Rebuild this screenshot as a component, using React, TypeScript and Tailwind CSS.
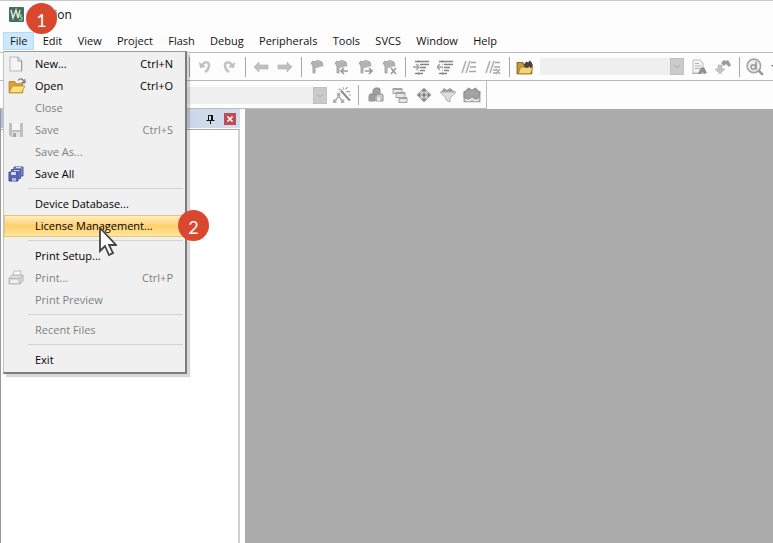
import React from 'react';

function Icon({ children, className = 'w-4 h-4' }: { children: React.ReactNode; className?: string }) {
  return (
    <svg viewBox="0 0 16 16" className={`${className} shrink-0`} fill="none" aria-hidden="true">
      {children}
    </svg>
  );
}

const flag = (
  <path d="M2 4l2-2 2 1c2-2 3-2 4-1l3 1 1 4c-3-1-4 2-7 1l-1 1v5H4V7z" fill="#b4b4b4" stroke="#a6a6a6" />
);

const icons = {
  undo: (
    <Icon>
      <path d="M2 3l1 6 6-1z" fill="#bdbdbd" />
      <path d="M5 6c3-4 7-3 7 0 0 3-1 5-4 7" stroke="#c2c2c2" strokeWidth="2.500" />
    </Icon>
  ),
  redo: (
    <Icon>
      <path d="M14 3l-1 6-6-1z" fill="#bdbdbd" />
      <path d="M11 6C8 2 4 3 4 6c0 3 1 5 4 7" stroke="#c2c2c2" strokeWidth="2.500" />
    </Icon>
  ),
  back: (
    <Icon>
      <path d="M1 8l5-5v3h9v4H6v3z" fill="#c0c0c0" stroke="#b0b0b0" strokeWidth=".6" />
    </Icon>
  ),
  forward: (
    <Icon>
      <path d="M15 8l-5-5v3H1v4h9v3z" fill="#c0c0c0" stroke="#b0b0b0" strokeWidth=".6" />
    </Icon>
  ),
  bookmark: <Icon>{flag}</Icon>,
  bookmarkPrev: (
    <Icon>
      {flag}
      <path d="M15 12H8" stroke="#fdfdfd" strokeWidth="5" />
      <path d="M15 12H8m3-3l-3 3 3 3" stroke="#999" strokeWidth="1.600" />
    </Icon>
  ),
  bookmarkNext: (
    <Icon>
      {flag}
      <path d="M8 12h7" stroke="#fdfdfd" strokeWidth="5" />
      <path d="M8 12h7m-3-3l3 3-3 3" stroke="#999" strokeWidth="1.600" />
    </Icon>
  ),
  bookmarkClear: (
    <Icon>
      {flag}
      <path d="M9 12h6" stroke="#fdfdfd" strokeWidth="5" />
      <path d="M10 9l5 6m0-6l-5 6" stroke="#999" strokeWidth="1.600" />
    </Icon>
  ),
  indent: (
    <Icon>
      <path d="M2 2.500h14M7 5.500h9M7 8.500h6M7 11.500h5M2 14.500h8" stroke="#858585" strokeWidth="1.400" />
      <path d="M0 8h6M3 5l3 3-3 3" stroke="#a0a0a0" strokeWidth="1.300" />
      <path d="M5.500 1v15" stroke="#b0b0b0" strokeDasharray="1 1" />
    </Icon>
  ),
  outdent: (
    <Icon>
      <path d="M2 2.500h14M7 5.500h9M7 8.500h6M7 11.500h5M2 14.500h8" stroke="#858585" strokeWidth="1.400" />
      <path d="M6 8H0M3 5L0 8l3 3" stroke="#a0a0a0" strokeWidth="1.300" />
      <path d="M5.500 1v15" stroke="#b0b0b0" strokeDasharray="1 1" />
    </Icon>
  ),
  comment: (
    <Icon>
      <path d="M1 14L5 2M5 14L9 2" stroke="#b0b0b0" strokeWidth="1.600" />
      <path d="M10 3.500h5M9 8h6M8 12.500h7" stroke="#a6a6a6" strokeWidth="1.400" />
    </Icon>
  ),
  uncomment: (
    <Icon>
      <path d="M1 14L5 2M5 14L9 2" stroke="#b0b0b0" strokeWidth="1.600" />
      <path d="M10 3.500h5M9 8h6M8 11h3M8 14h3M11 10l4 5m0-5l-4 5" stroke="#a6a6a6" strokeWidth="1.300" />
    </Icon>
  ),
  findFolder: (
    <Icon className="w-[18px] h-[18px]">
      <path d="M1 14V4h5l1 2h7v8z" fill="#c99a3a" stroke="#84682c" />
      <path d="M2 14l2-6h11l-2 6z" fill="#f6d46e" stroke="#987936" strokeWidth=".7" />
      <path d="M7 6l2-3 2 1 1-2 2 2 1 3-2 2-1-2-2 2-1-1-1 1z" fill="#4a4436" />
    </Icon>
  ),
  findInFiles: (
    <Icon>
      <path d="M2 1h7l3 3v10H2z" fill="#f2f2f2" stroke="#bdbdbd" />
      <path d="M4 4.500h4M4 7h6M4 9.500h5M1 14.500h10" stroke="#b4b4b4" />
      <path d="M7 15l2-5 2-2 1 1 1-1 3 6-3 1-2-2-1 2z" fill="#909090" />
    </Icon>
  ),
  findNext: (
    <Icon>
      <path d="M6 4l3-3 2 1 2-1 3 5-2 2-3-3-2 2z" fill="#9b9b9b" />
      <path d="M3 6h4v4h3l-5 5-5-5h3z" fill="#c4c4c4" stroke="#b0b0b0" strokeWidth=".6" />
    </Icon>
  ),
  debug: (
    <Icon className="w-[18px] h-[18px]">
      <circle cx="7" cy="7" r="6" fill="#eee" stroke="#a6a6a6" strokeWidth="1.400" />
      <path d="M11 11l4 4" stroke="#999" strokeWidth="2.400" />
      <circle cx="6.500" cy="8" r="2" stroke="#9b9b9b" strokeWidth="1.300" />
      <path d="M9 3v7.500" stroke="#9b9b9b" strokeWidth="1.400" />
    </Icon>
  ),
  wand: (
    <Icon className="w-[18px] h-[18px]">
      <path d="M7 4l8 9" stroke="#8b8b8b" strokeWidth="1.800" />
      <path d="M5 7v3M2 13l3-4 3 4" stroke="#aaa" strokeWidth="1.300" />
      <path d="M0 12h3v3H0zM7 12h3v3H7zM3.500 6h3v3h-3z" fill="#b0b0b0" />
      <path d="M9 1v2M13 1l-2 2M15 5h-3M14 8h2M5 3h2" stroke="#a0a0a0" />
    </Icon>
  ),
  build: (
    <Icon>
      <path d="M5 3l2-2h4l1 1v6H5z" fill="#a0a0a0" stroke="#909090" />
      <path d="M1 9l1-2h5v7H1z" fill="#9e9e9e" stroke="#909090" />
      <path d="M8 9l1-2h5l1 1v6H8z" fill="#c9c9c9" stroke="#909090" />
      <path d="M9 10h3v4H9z" fill="#e8e8e8" />
    </Icon>
  ),
  windows: (
    <Icon>
      <path d="M1 1.500h9v5H1zM4 5.500h9v5H4zM7 10.500h8v5H7z" fill="#e7e7e7" stroke="#a3a3a3" />
      <path d="M1 2h9M4 6h9M7 11h8" stroke="#a3a3a3" strokeWidth="2" />
    </Icon>
  ),
  diamond: (
    <Icon>
      <path d="M8 1l7 7-7 7-7-7z" fill="#b0b0b0" stroke="#a6a6a6" />
      <path d="M4.500 4.500l7 7m0-7l-7 7" stroke="#dedede" strokeWidth="1.500" />
      <path d="M8 2l2 2H6zM8 14l2-2H6zM2 8l2-2v4zM14 8l-2-2v4zM8 6l2 2-2 2-2-2z" fill="#7c7c7c" />
    </Icon>
  ),
  filter: (
    <Icon>
      <path d="M1 5l3-4 3 2 3-2 5 4z" fill="#999" />
      <path d="M0 5h16l-6 6v4l-4-2v-2z" fill="#dedede" stroke="#b0b0b0" />
    </Icon>
  ),
  packages: (
    <Icon className="w-[18px] h-[18px]">
      <path d="M1 5h14v9H1z" fill="#c4c4c4" stroke="#999" />
      <path d="M1 6l4-4 3 2 3-2 4 4-1 4-3 2-3-2-3 2-4-2z" fill="#a3a3a3" stroke="#909090" />
      <path d="M2 12l3 1 3-2 3 2 3-1" stroke="#eee" strokeWidth="1.300" />
    </Icon>
  ),
  newFile: (
    <Icon>
      <path d="M2 1h8l4 4v10H2z" fill="#f4f4f4" stroke="#b8b8b8" />
      <path d="M10 1v4h4M13.500 5v10" stroke="#a0a0a0" />
    </Icon>
  ),
  open: (
    <Icon className="w-[18px] h-[18px]">
      <path d="M1 14V4h5l1 2h6v8z" fill="#dca42e" stroke="#a4781f" strokeWidth=".7" />
      <path d="M1 14l3-6h11l-3 6z" fill="#ffe176" stroke="#b78b2c" strokeWidth=".7" />
      <path d="M9 3c2-2 4-2 5 1m1-2v3h-3" stroke="#666" />
    </Icon>
  ),
  save: (
    <Icon>
      <path d="M1 1h14v14H3l-2-2z" fill="#c0c0c0" />
      <path d="M4 1h8v7H4z" fill="#f4f4f4" />
      <path d="M4 10h8v5H4z" fill="#e4e4e4" />
      <path d="M5 11h3v4H5z" fill="#a6a6a6" />
    </Icon>
  ),
  saveAll: (
    <Icon>
      <path d="M6 1h9v9H6z" fill="#7f89cb" stroke="#4d569c" />
      <path d="M3.500 3.500h9v9h-9z" fill="#6f7bc6" stroke="#4d569c" />
      <path d="M1 6h9v9H1z" fill="#5664b8" stroke="#414a93" />
      <path d="M3 6h5v3H3zM6 4h5v1H6zM8 1h5v1H8z" fill="#d5daf6" />
      <path d="M4 12h4v3H4z" fill="#aab4e4" />
    </Icon>
  ),
  print: (
    <Icon>
      <path d="M5 6l1-5h7l-1 5z" fill="#fafafa" stroke="#bdbdbd" />
      <path d="M1 8l3-3h11v6l-3 3H1z" fill="#ddd" stroke="#b4b4b4" />
      <path d="M1 8.500h11l3-3M12 8v6" stroke="#b4b4b4" />
      <path d="M3 11.500h7" stroke="#f8f8f8" strokeWidth="2" />
    </Icon>
  ),
};

type IconName = keyof typeof icons;

const menus = ['File', 'Edit', 'View', 'Project', 'Flash', 'Debug', 'Peripherals', 'Tools', 'SVCS', 'Window', 'Help'];

type MenuEntry = { label: string; icon?: IconName; keys?: string; off?: boolean; hot?: boolean };

const fileMenu: MenuEntry[][] = [
  [
    { label: 'New...', icon: 'newFile', keys: 'Ctrl+N' },
    { label: 'Open', icon: 'open', keys: 'Ctrl+O' },
    { label: 'Close', off: true },
    { label: 'Save', icon: 'save', keys: 'Ctrl+S', off: true },
    { label: 'Save As...', off: true },
    { label: 'Save All', icon: 'saveAll' },
  ],
  [{ label: 'Device Database...' }, { label: 'License Management...', hot: true }],
  [
    { label: 'Print Setup...' },
    { label: 'Print...', icon: 'print', keys: 'Ctrl+P', off: true },
    { label: 'Print Preview', off: true },
  ],
  [{ label: 'Recent Files', off: true }],
  [{ label: 'Exit' }],
];

function ToolButtons({ names }: { names: IconName[] }) {
  return (
    <>
      {names.map((name) => (
        <button key={name} aria-label={name} className="w-6 h-6 shrink-0 flex items-center justify-center">
          {icons[name]}
        </button>
      ))}
    </>
  );
}

function Separator() {
  return (
    <div className="w-2 shrink-0 flex justify-center">
      <div className="w-px h-5 bg-[#a8a8a8]" />
    </div>
  );
}

function Combo({ label, className }: { label: string; className: string }) {
  return (
    <div className={`${className} h-[17px] shrink-0 flex bg-[#f0eff0]`}>
      <select aria-label={label} className="flex-1 min-w-0 appearance-none bg-transparent" disabled />
      <div className="w-[14px] flex items-center justify-center bg-[#cbcbcb] border border-[#c0c0c0]">
        <svg viewBox="0 0 8 5" className="w-2 h-[5px]" fill="none">
          <path d="M1 1l3 3 3-3" stroke="#a6a6a6" />
        </svg>
      </div>
    </div>
  );
}

function FileMenu() {
  return (
    <div className="absolute left-[3px] top-[51px] z-10 w-[184px] bg-[#f0f0f0] border-t border-l border-t-[#999] border-l-[#c4c4c4] border-r-2 border-b-2 border-r-[#7c7c7c] border-b-[#7c7c7c] shadow-[3px_3px_1px_#00000028] py-px">
      {fileMenu.map((group, i) => (
        <div key={i}>
          {i > 0 && (
            <div className="h-2 flex items-start pt-[3px] pl-6 pr-0.5">
              <div className="h-px flex-1 bg-[#d2d2d2]" />
            </div>
          )}
          {group.map((item) => (
            <button
              key={item.label}
              disabled={item.off}
              className={`w-full h-[22px] flex items-center pl-1 pr-3 ${item.off ? 'text-[#808080]' : 'text-black'} ${
                item.hot
                  ? 'bg-linear-to-b from-[#fff1c8] via-[#ffd06a] to-[#ffe9a6] outline outline-1 -outline-offset-1 outline-[#e8c576]'
                  : ''
              }`}
            >
              <span className="w-[27px] flex items-center">{item.icon && icons[item.icon]}</span>
              <span className="flex-1 text-left whitespace-nowrap">{item.label}</span>
              <span>{item.keys}</span>
            </button>
          ))}
        </div>
      ))}
    </div>
  );
}

function Step({ n, className }: { n: number; className: string }) {
  return (
    <div
      className={`${className} absolute z-20 w-[31px] h-[31px] pt-0.5 rounded-full bg-[#d9482e] text-white text-[18px] font-['Lato',sans-serif] font-normal flex items-center justify-center`}
    >
      {n}
    </div>
  );
}

export default function App() {
  return (
    <div className="relative min-h-screen flex flex-col overflow-hidden bg-[#fdfdfd] text-[11px] leading-4 font-medium text-[#111] font-['Open_Sans',sans-serif]">
      <header className="h-8 flex items-center pl-[9px] gap-[7px] border-t border-t-[#c8c8c8]">
        <svg viewBox="0 0 15 15" className="w-[15px] h-[15px] -mt-1" fill="none">
          <rect width="15" height="15" rx="1" fill="#456f57" />
          <path d="M2 3l2 8 3-8 2 8 2-8" stroke="#d9e6dc" strokeWidth="1.500" />
          <path d="M13 8h-2v2h2v3h-3" stroke="#b9d0bf" />
        </svg>
        <h1 className="text-[12px] -mt-1">µVision</h1>
      </header>

      <nav className="h-5 w-[501px] ml-[3px] flex items-start justify-between">
        {menus.map((name) => (
          <button
            key={name}
            className={`h-[18px] px-[7px] shrink-0 flex items-center ${
              name === 'File' ? 'bg-[#cce8ff] outline outline-1 -outline-offset-1 outline-[#b4daf5]' : ''
            }`}
          >
            {name}
          </button>
        ))}
      </nav>

      <div className="h-[29px] flex items-center border-y border-[#b9b9b9] pl-[185px] overflow-hidden">
        <Separator />
        <ToolButtons names={['undo', 'redo']} />
        <Separator />
        <ToolButtons names={['back', 'forward']} />
        <Separator />
        <ToolButtons names={['bookmark', 'bookmarkPrev', 'bookmarkNext', 'bookmarkClear']} />
        <Separator />
        <ToolButtons names={['indent', 'outdent', 'comment', 'uncomment']} />
        <Separator />
        <ToolButtons names={['findFolder']} />
        <Combo label="Find" className="w-36 mx-[3px]" />
        <ToolButtons names={['findInFiles', 'findNext']} />
        <Separator />
        <ToolButtons names={['debug']} />
        <svg viewBox="0 0 8 4" className="w-2 h-1 shrink-0 ml-1">
          <path d="M0 0h8L4 4z" fill="#666" />
        </svg>
      </div>

      <div className="h-7 flex">
        <div className="w-[487px] shrink-0 flex items-center justify-end pt-px pr-px border-r border-b border-[#bdbdbd]">
          <Combo label="Target" className="w-40" />
          <div className="w-[3px]" />
          <ToolButtons names={['wand']} />
          <Separator />
          <div className="pr-px pl-[2px] flex">
            <ToolButtons names={['build', 'windows', 'diamond', 'filter', 'packages']} />
          </div>
        </div>
      </div>

      <main className="flex-1 flex">
        <aside className="w-[245px] shrink-0 flex flex-col border-l border-l-[#999] pr-[5px] bg-[#fdfdfd]">
          <div className="h-[19px] flex items-center justify-end gap-2 pr-1 bg-linear-to-r from-[#b3c2dc] to-[#d3deed]">
            <button aria-label="Auto hide" className="w-3 h-3">
              <svg viewBox="0 0 12 12" className="w-3 h-3" fill="none">
                <path d="M4.500 7V2.500h4V7M2.500 7.500h8M6.500 8v3" stroke="#111" />
                <path d="M8 2v5" stroke="#111" strokeWidth="2" />
              </svg>
            </button>
            <button aria-label="Close" className="w-3 h-3 flex items-center justify-center bg-[#bf4d55]">
              <svg viewBox="0 0 8 8" className="w-2 h-2" fill="none">
                <path d="M1.500 1.500l5 5m0-5l-5 5" stroke="#fff" strokeWidth="1.700" />
              </svg>
            </button>
          </div>
          <div className="flex-1 mt-px border-t border-r-2 border-t-[#aaa] border-r-[#d0d0d0] bg-white" />
        </aside>
        <section className="flex-1 bg-[#ababab]" />
      </main>

      <FileMenu />
      <Step n={1} className="left-[26px] top-[3px]" />
      <Step n={2} className="left-[178px] top-[210px]" />
      <svg viewBox="0 0 18 30" className="absolute z-20 left-[99px] top-[227px] w-[18px] h-[30px]">
        <path d="M1 1v23l5-5 4 9 4-2-4-8h7z" fill="#fff" stroke="#444" strokeWidth="1.800" />
      </svg>
    </div>
  );
}
